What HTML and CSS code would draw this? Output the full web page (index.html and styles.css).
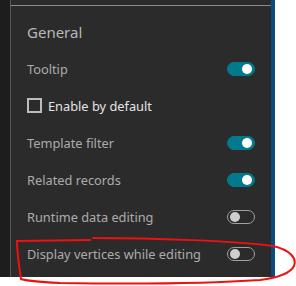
FILE: index.html
```html
<!DOCTYPE html>
<html>
	<head>
		<title>Editor Settings</title>
		<link rel="stylesheet" href="styles.css">
	</head>
	<body>
	<div class="app">
		<div class="rail"></div>
		<div class="panel">
			<div class="panel-top"></div>
			<div class="settings">
				<div class="row heading">General</div>
				<div class="row"><span class="label">Tooltip</span><span class="switch on"></span></div>
				<div class="row"><label class="check"><span class="box"></span>Enable by default</label></div>
				<div class="row"><span class="label">Template filter</span><span class="switch on"></span></div>
				<div class="row"><span class="label">Related records</span><span class="switch on"></span></div>
				<div class="row"><span class="label">Runtime data editing</span><span class="switch"></span></div>
				<div class="row"><span class="label">Display vertices while editing</span><span class="switch"></span></div>
			</div>
		</div>
		<div class="edge"></div>
	</div>
	<svg class="markup" width="296" height="286" viewBox="0 0 296 286">
		<path d="M17,241 L90,240"/>
		<path d="M93,238 C150,238 240,241 273,246 C290,250 297,258 294,266 C290,274 276,278 260,280 C200,284 120,284 60,283 C40,282 26,281 21,279 C19,266 17,252 17,241"/>
	</svg>
	</body>
</html>
```

FILE: styles.css
```css
body {
	margin: 0;
	background-color: #fff;
	font-family: "Noto Sans", sans-serif;
}
.app {
	display: flex;
	height: 277px;
}
.rail {
	width: 10px;
	background-color: #1d1d1d;
}
.panel {
	width: 260px;
	background-color: #2b2b2b;
	border-left: 1px solid #585858;
}
.panel-top {
	height: 5px;
	border-bottom: 1px solid #8a8a8a;
}
.edge {
	width: 4px;
	background-color: #0c4b80;
}
.settings {
	padding: 7px 16px 0 16px;
}
.row {
	height: 37px;
	display: flex;
	align-items: center;
	justify-content: space-between;
	font-size: 12.8px;
	color: #ababab;
}
.row.heading {
	font-size: 15px;
	color: #b8b8b8;
}
.check {
	display: flex;
	align-items: center;
	color: #e4e4e4;
}
.check .box {
	width: 11px;
	height: 11px;
	border: 2px solid #bcbcbc;
	margin-right: 6px;
}
.switch {
	position: relative;
	width: 26px;
	height: 12px;
	border: 1px solid #a0a0a0;
	border-radius: 8px;
	background-color: #2b2b2b;
}
.switch::after {
	content: "";
	position: absolute;
	left: 2px;
	top: 1px;
	width: 10px;
	height: 10px;
	border-radius: 50%;
	background-color: #cfcfcf;
}
.switch.on {
	background-color: #007a8c;
	border-color: #007a8c;
}
.switch.on::after {
	left: auto;
	right: 2px;
	background-color: #fff;
}
.markup {
	position: absolute;
	left: 0;
	top: 0;
	pointer-events: none;
}
.markup path {
	fill: none;
	stroke: #f01010;
	stroke-width: 2;
	stroke-linecap: round;
}
```
